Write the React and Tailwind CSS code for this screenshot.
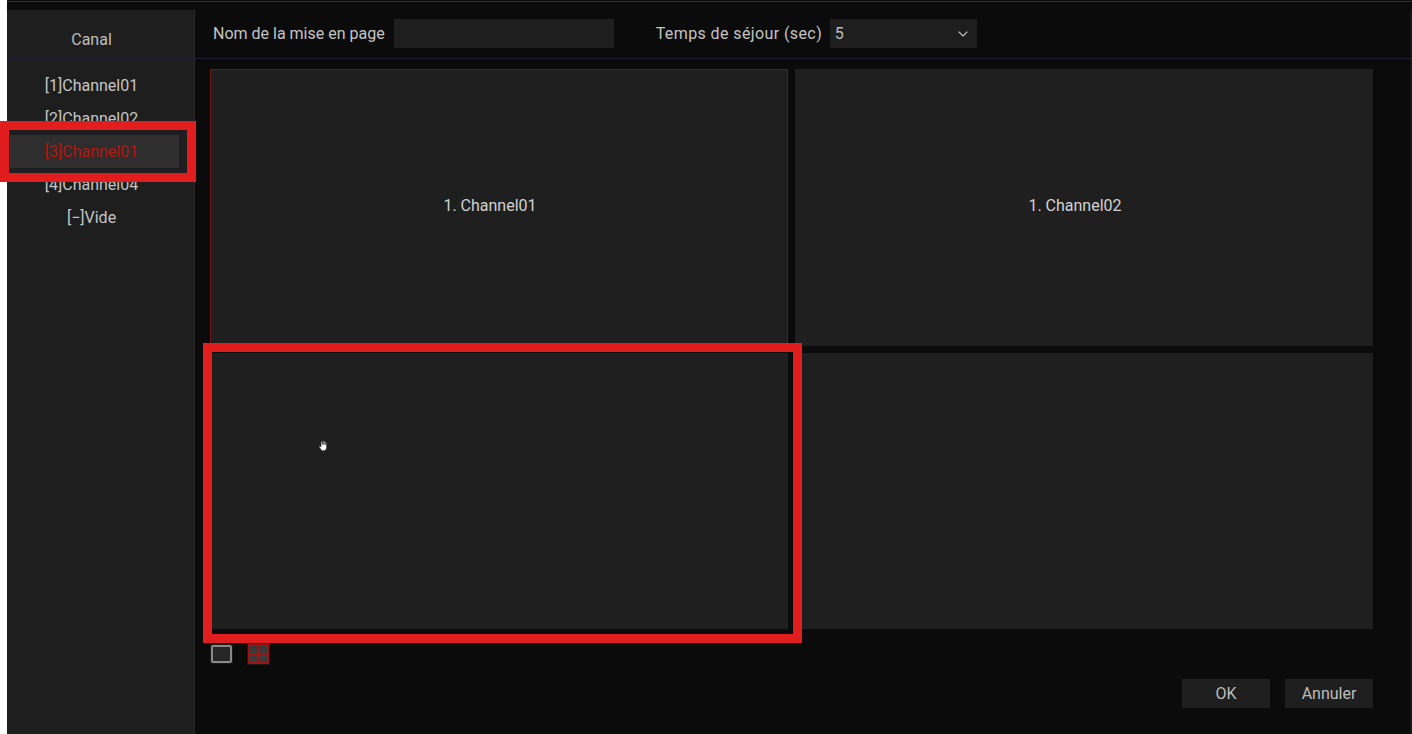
import { ChevronDown } from "lucide-react";

const channels = ["[1]Channel01", "[2]Channel02", "[3]Channel01", "[4]Channel04", "[−]Vide"];

function HandCursor() {
  return (
    <svg width="12" height="12" viewBox="0 0 12 12" className="absolute left-[318px] top-[440px]">
      <path
        d="M3 5V2.2a.7.7 0 0 1 1.4 0V4.5V1.5a.7.7 0 0 1 1.4 0V4.5V2a.7.7 0 0 1 1.4 0V5V3a.7.7 0 0 1 1.4 0v4.5c0 2-1.3 3.3-3 3.3H5.2C4 10.8 3.2 10 2.5 9L1.2 6.8a.7.7 0 0 1 1.1-.8L3 7z"
        fill="#fff"
        stroke="#222"
        strokeWidth="0.6"
      />
    </svg>
  );
}

export default function App() {
  return (
    <div
      className="relative flex h-[734px] w-[1412px] overflow-hidden bg-[#0b0b0b] text-[16px] text-[#c4c4c4]"
      style={{ fontFamily: "Roboto, 'Liberation Sans', sans-serif" }}
    >
      {/* left white edge */}
      <div className="w-[7px] shrink-0 bg-white" />

      <div className="flex flex-1 flex-col">
        {/* top line */}
        <div className="mt-[1px] h-[1px] bg-[#343434]" />
        <div className="h-[8px]" />

        <div className="flex flex-1">
          {/* Sidebar */}
          <aside className="flex w-[188px] shrink-0 flex-col border-r border-[#2a2a2a] bg-[#1e1e1e]">
            <div className="flex h-[48px] items-center justify-center pr-[18px] pt-[12px] text-[#bdbdbd]">Canal</div>
            <div className="h-[1px] bg-[#1f1b36]" />
            <ul className="mt-[10px] flex flex-col">
              {channels.map((c, i) => (
                <li
                  key={c}
                  className={
                    i === 2
                      ? "ml-[3px] flex h-[33px] w-[169px] items-center justify-center bg-[#2e2e2e] pr-[6px] text-[#b4170f]"
                      : "ml-[3px] flex h-[33px] w-[169px] items-center justify-center pr-[6px]"
                  }
                >
                  {c}
                </li>
              ))}
            </ul>
          </aside>

          {/* Main */}
          <main className="flex flex-1 flex-col">
            <div className="flex h-[48px] items-center pb-[1px] pl-[18px]">
              <span className="mr-[9px] whitespace-nowrap">Nom de la mise en page</span>
              <div className="h-[29px] w-[220px] shrink-0 bg-[#1e1e1e]" />
              <span className="ml-[42px] mr-[8px] w-[166px] shrink-0 whitespace-nowrap tracking-[0.4px]">
                Temps de séjour (sec)
              </span>
              <div className="flex h-[29px] w-[147px] shrink-0 items-center justify-between bg-[#1e1e1e] pl-[5px] pr-[6px]">
                <span className="text-[#bdbdbd]">5</span>
                <ChevronDown size={16} strokeWidth={1.6} className="text-[#c0c0c0]" />
              </div>
            </div>
            <div className="h-[1px] bg-[#1f1b36]" />

            <div className="ml-[15px] mt-[10px] grid w-[1163px] grid-cols-2 grid-rows-[277px_276px] gap-[7px]">
              <div className="flex items-center justify-center border border-[#6e1616] bg-[#1f1f1f] pb-[3px] pr-[18px] text-[#d2d2d2]">
                1. Channel01
              </div>
              <div className="flex items-center justify-center bg-[#1f1f1f] pb-[3px] pr-[18px] text-[#d2d2d2]">
                1. Channel02
              </div>
              <div className="bg-[#1f1f1f]" />
              <div className="bg-[#1f1f1f]" />
            </div>

            {/* layout icons */}
            <div className="ml-[15px] mt-[14px] flex items-center gap-[14px]">
              <div className="flex h-[20px] w-[23px] items-center justify-center bg-[#1a1a1a]">
                <div className="h-[18px] w-[21px] rounded-[2px] border-2 border-[#8a8a8a] bg-[#262626]" />
              </div>
              <div className="flex h-[22px] w-[23px] items-center justify-center bg-[#1a1a1a]">
                <div className="grid h-[20px] w-[21px] grid-cols-2 grid-rows-2 gap-[2px] border-2 border-[#9b1414] bg-[#9b1414]">
                  <div className="bg-[#3a3a3a]" />
                  <div className="bg-[#3a3a3a]" />
                  <div className="bg-[#3a3a3a]" />
                  <div className="bg-[#3a3a3a]" />
                </div>
              </div>
            </div>

            <div className="ml-[987px] mt-[14px] flex gap-[15px]">
              <button className="h-[29px] w-[88px] bg-[#1f1f1f] text-[#bdbdbd]">OK</button>
              <button className="h-[29px] w-[88px] bg-[#1f1f1f] text-[#bdbdbd]">Annuler</button>
            </div>
          </main>

          <div className="w-[2px] shrink-0 bg-[#181818]" />
        </div>
      </div>

      {/* annotations */}
      <div className="absolute left-0 top-[121px] h-[61px] w-[196px] border-[9px] border-[#e21d1d]" />
      <div className="absolute left-[203px] top-[343px] h-[300px] w-[599px] border-[9px] border-[#e21d1d]" />
      <HandCursor />
    </div>
  );
}
